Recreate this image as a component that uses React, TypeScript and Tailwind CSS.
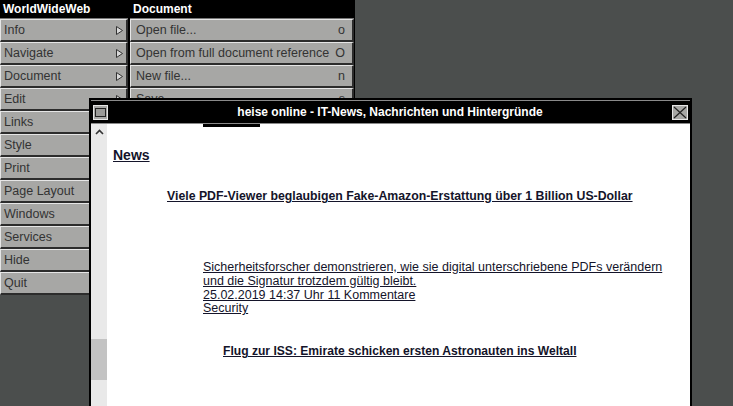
const mainItems = [
  "Info",
  "Navigate",
  "Document",
  "Edit",
  "Links",
  "Style",
  "Print",
  "Page Layout",
  "Windows",
  "Services",
  "Hide",
  "Quit",
];

const subMenuItems = new Set(["Info", "Navigate", "Document", "Edit", "Links", "Style"]);

const docItems = [
  { label: "Open file...", key: "o" },
  { label: "Open from full document reference", key: "O" },
  { label: "New file...", key: "n" },
  { label: "Save...", key: "s" },
];

const Arrow = () => (
  <svg width="7" height="9" viewBox="0 0 7 9" className="shrink-0">
    <path d="M0.5 0.5 L6.5 4.5 L0.5 8.5 Z" fill="#d8d8d8" stroke="#333" strokeWidth="1" />
  </svg>
);

const MenuRow = ({ children }: { children: React.ReactNode }) => (
  <div className="h-[23px] flex items-center justify-between gap-1 whitespace-nowrap px-[3px] bg-[#a7a7a5] border-t border-l border-t-[#e6e6e6] border-l-[#e6e6e6] border-b-2 border-r-2 border-b-[#2c2c2c] border-r-[#2c2c2c] text-[12.5px] text-[#333]">
    {children}
  </div>
);

const MenuHeader = ({ title }: { title: string }) => (
  <div className="h-[19px] bg-black flex items-center px-[3px] text-white text-[12px] font-bold border-b border-[#777]">
    {title}
  </div>
);

const App = () => {
  return (
    <div className="relative w-[733px] h-[406px] overflow-hidden bg-[#4b4e4d] font-['Liberation_Sans',Arial,sans-serif]">
      {/* MAIN MENU */}
      <div className="absolute left-0 top-0 w-[129px] flex flex-col bg-black border-r border-black">
        <MenuHeader title="WorldWideWeb" />
        {mainItems.map((item) => (
          <MenuRow key={item}>
            <span>{item}</span>
            {subMenuItems.has(item) && <Arrow />}
          </MenuRow>
        ))}
      </div>

      {/* DOCUMENT SUBMENU */}
      <div className="absolute left-[129px] top-0 w-[226px] flex flex-col bg-black border-l border-r border-black">
        <MenuHeader title="Document" />
        {docItems.map((item) => (
          <MenuRow key={item.label}>
            <span className="pl-[2px]">{item.label}</span>
            <span className="pr-[4px]">{item.key}</span>
          </MenuRow>
        ))}
      </div>

      {/* BROWSER WINDOW */}
      <div className="absolute left-[89px] top-[98px] w-[603px] h-[320px] bg-black border-2 border-black flex flex-col">
        {/* title bar */}
        <div className="h-[24px] shrink-0 bg-black border-t border-[#8a8a8a] border-b border-b-[#8a8a8a] flex items-center px-[2px] relative">
          <div className="w-[15px] h-[15px] bg-[#a7a7a5] border border-[#e6e6e6] flex items-center justify-center">
            <div className="w-[11px] h-[9px] border border-[#222] bg-[#9a9a98]" />
          </div>
          <div className="flex-1 text-center text-white text-[12px] font-bold">
            heise online - IT-News, Nachrichten und Hintergründe
          </div>
          <div className="w-[16px] h-[15px] bg-[#a7a7a5] border border-[#e6e6e6] flex items-center justify-center">
            <svg width="14" height="13" viewBox="0 0 14 13">
              <path d="M1 1 L13 12 M13 1 L1 12" stroke="#222" strokeWidth="1.2" />
            </svg>
          </div>
        </div>

        {/* content */}
        <div className="flex-1 flex bg-white">
          {/* scroller */}
          <div className="w-[16px] shrink-0 bg-[#e9e9e9] flex flex-col items-center">
            <svg width="9" height="6" viewBox="0 0 9 6" className="mt-[5px]">
              <path d="M1 5 L4.5 1.5 L8 5" stroke="#333" strokeWidth="1.6" fill="none" />
            </svg>
            <div className="mt-[204px] w-full h-[41px] bg-[#c3c3c3]" />
          </div>

          <div className="flex-1 flex flex-col text-[#14142a]">
            <div className="ml-[96px] w-[57px] h-[3px] bg-black" />
            <div className="ml-[6px] mt-[20px] text-[14px] font-bold underline leading-[16px]">News</div>
            <div className="ml-[60px] mt-[26px] text-[12.3px] font-bold underline leading-[14px]">
              Viele PDF-Viewer beglaubigen Fake-Amazon-Erstattung über 1 Billion US-Dollar
            </div>
            <div className="ml-[96px] mt-[58px] text-[12.5px] leading-[13.8px] underline">
              <div>Sicherheitsforscher demonstrieren, wie sie digital unterschriebene PDFs verändern</div>
              <div>und die Signatur trotzdem gültig bleibt.</div>
              <div>25.02.2019 14:37 Uhr 11 Kommentare</div>
              <div>Security</div>
            </div>
            <div className="ml-[116px] mt-[28px] text-[12.1px] font-bold underline leading-[14px]">
              Flug zur ISS: Emirate schicken ersten Astronauten ins Weltall
            </div>
          </div>
        </div>
      </div>
    </div>
  );
};

export default App;
